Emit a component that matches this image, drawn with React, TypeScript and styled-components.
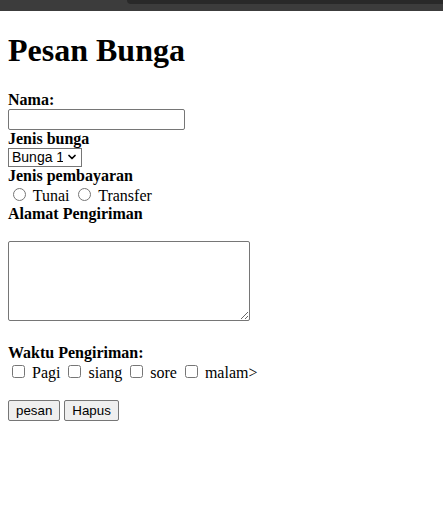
import React from "react";
import styled, { createGlobalStyle } from "styled-components";
import { ChevronDown } from "lucide-react";

const GlobalStyle = createGlobalStyle`
    html, body {
        margin: 0;
        padding: 0;
        background: #fff;
    }
    body {
        font-family: "Liberation Serif", "Times New Roman", serif;
        font-size: 16px;
        color: #000;
    }
`;

const TopBar = styled.div`
    display: flex;
    height: 11px;
    background: #3c3c3c;
`;

const Tab = styled.div`
    flex: 1;
    height: 4px;
    margin-left: 127px;
    background: #292929;
    border-bottom-left-radius: 8px;
`;

const Page = styled.div`
    padding: 0 8px 8px;
`;

const Title = styled.h1`
    font-size: 32px;
    font-weight: bold;
    margin: 21.44px 0;
`;

const Form = styled.form`
    display: block;
`;

const Line = styled.div<{ $gapAfter?: boolean }>`
    display: block;
    margin-bottom: ${(p) => (p.$gapAfter ? "18.4px" : "0")};
`;

const Label = styled.b`
    font-weight: bold;
`;

const controlFont = `
    font-family: "Liberation Sans", Arial, sans-serif;
    font-size: 13.333px;
`;

const TextInput = styled.input`
    ${controlFont}
    box-sizing: border-box;
    width: 177px;
    height: 21px;
    margin: 0;
    padding: 1px 2px;
    border: 1px solid #767676;
    border-radius: 2px;
    background: #fff;
`;

const SelectWrap = styled.span`
    position: relative;
    display: inline-block;
`;

const Select = styled.select`
    ${controlFont}
    font-size: 14px;
    appearance: none;
    box-sizing: border-box;
    width: 74px;
    height: 19px;
    margin: 0;
    padding: 0 18px 0 3px;
    border: 1px solid #767676;
    border-radius: 0;
    background: #fff;
    color: #000;
`;

const Chevron = styled.span`
    position: absolute;
    right: 4px;
    top: 3px;
    display: flex;
    pointer-events: none;
`;

const Radio = styled.input.attrs({ type: "radio" })`
    margin: 3px 3px 0 5px;
`;

const Check = styled.input.attrs({ type: "checkbox" })`
    margin: 3px 3px 3px 4px;
`;

const TextArea = styled.textarea`
    box-sizing: border-box;
    width: 242px;
    height: 80px;
    margin: 0;
    padding: 2px;
    border: 1px solid #767676;
    border-radius: 2px;
    font-family: "Liberation Mono", monospace;
    font-size: 13.333px;
    vertical-align: baseline;
`;

const Button = styled.button`
    ${controlFont}
    margin: 0;
    padding: 1px 7px;
    border: 1px solid #767676;
    border-radius: 2px;
    background: #efefef;
    color: #000;
    height: 21px;
`;

const times = ["Pagi", "siang", "sore", "malam>"];

const App = () => {
    return (
        <>
            <GlobalStyle />
            <TopBar>
                <Tab />
            </TopBar>
            <Page>
                <Title>Pesan Bunga</Title>
                <Form onSubmit={(e) => e.preventDefault()}>
                    <Line>
                        <Label>Nama:</Label>
                    </Line>
                    <Line>
                        <TextInput type="text" />
                    </Line>
                    <Line>
                        <Label>Jenis bunga</Label>
                    </Line>
                    <Line>
                        <SelectWrap>
                            <Select defaultValue="Bunga 1">
                                <option>Bunga 1</option>
                                <option>Bunga 2</option>
                                <option>Bunga 3</option>
                            </Select>
                            <Chevron>
                                <ChevronDown size={12} strokeWidth={3.5} />
                            </Chevron>
                        </SelectWrap>
                    </Line>
                    <Line>
                        <Label>Jenis pembayaran</Label>
                    </Line>
                    <Line>
                        <Radio name="bayar" /> Tunai <Radio name="bayar" /> Transfer
                    </Line>
                    <Line $gapAfter>
                        <Label>Alamat Pengiriman</Label>
                    </Line>
                    <Line $gapAfter>
                        <TextArea />
                    </Line>
                    <Line>
                        <Label>Waktu Pengiriman:</Label>
                    </Line>
                    <Line $gapAfter>
                        {times.map((t) => (
                            <React.Fragment key={t}>
                                <Check /> {t}{" "}
                            </React.Fragment>
                        ))}
                    </Line>
                    <Line>
                        <Button type="submit">pesan</Button> <Button type="reset">Hapus</Button>
                    </Line>
                </Form>
            </Page>
        </>
    );
};

export default App;
